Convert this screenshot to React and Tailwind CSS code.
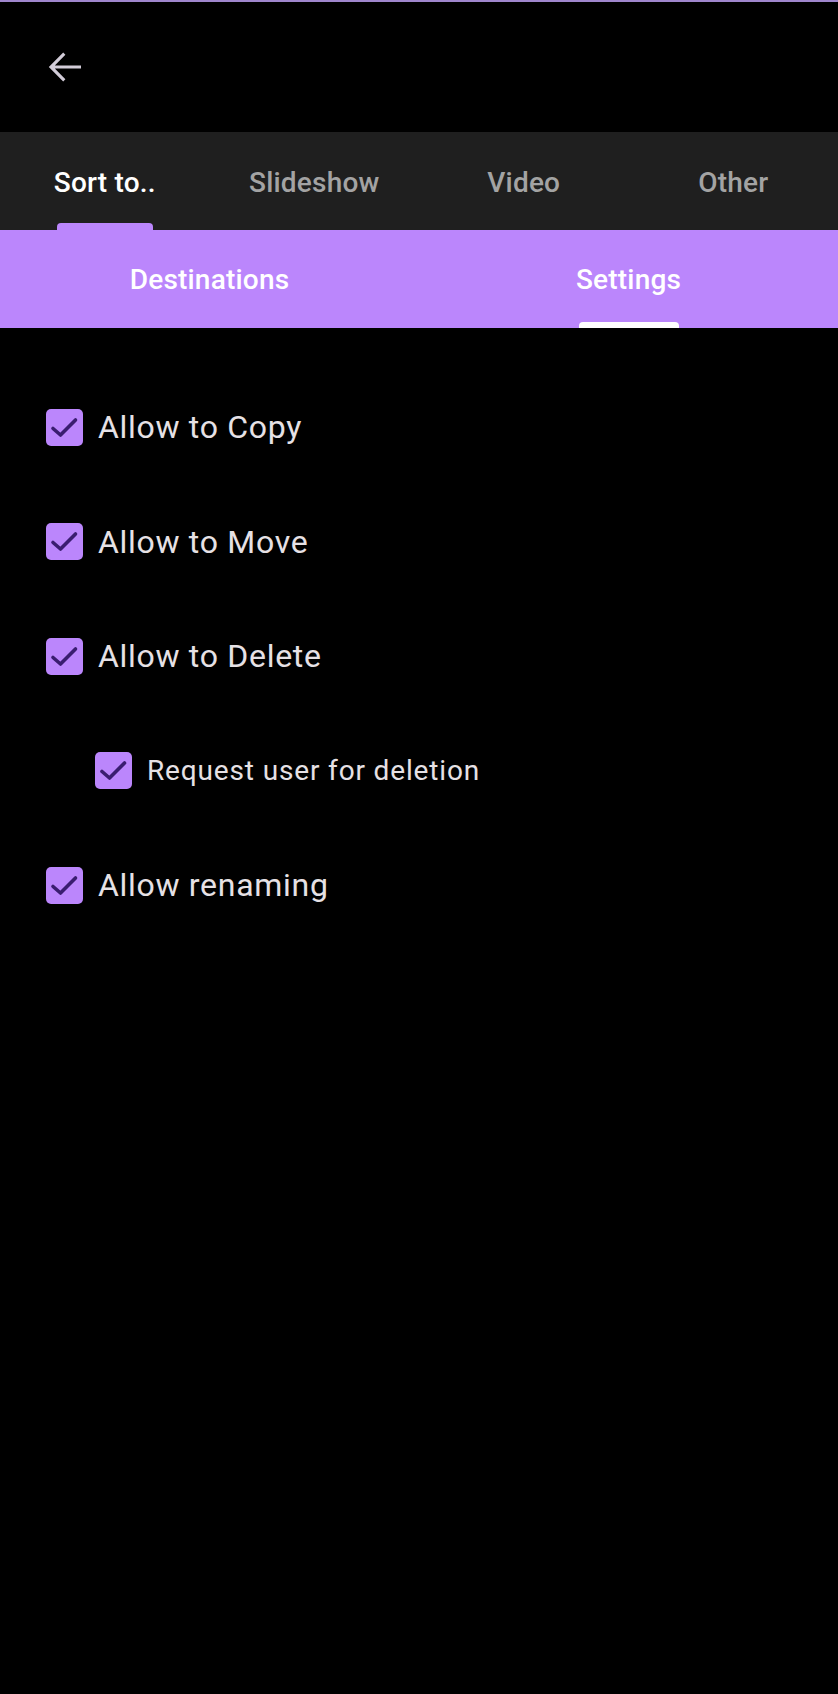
import React from "react";

function CheckBox() {
  return (
    <div className="w-[37px] h-[37px] rounded-[5px] bg-[#bb86fc] flex-none">
      <svg width="37" height="37" viewBox="0 0 37 37">
        <polyline
          points="7,19.5 14.5,26 29.5,11"
          fill="none"
          stroke="#3a1d70"
          strokeWidth="3.6"
          strokeLinecap="round"
          strokeLinejoin="round"
        />
      </svg>
    </div>
  );
}

function App() {
  const topTabs = ["Sort to..", "Slideshow", "Video", "Other"];

  const options = [
    { label: "Allow to Copy" },
    { label: "Allow to Move" },
    { label: "Allow to Delete" },
    { label: "Request user for deletion", nested: true },
    { label: "Allow renaming" },
  ];

  return (
    <div
      className="min-h-[1694px] w-full bg-black"
      style={{ fontFamily: "Roboto, 'Noto Sans', sans-serif" }}
    >
      {/* status line */}
      <div className="h-[2px] bg-[#9f86cc]" />

      {/* Toolbar */}
      <div className="h-[130px] flex items-center pl-[41px]">
        <svg width="48" height="48" viewBox="0 0 24 24" fill="#d2ccd8">
          <path d="M20 11.2H6.9l5.3-5.3-1.1-1.1L3.9 12l7.2 7.2 1.1-1.1-5.3-5.3H20v-1.6z" />
        </svg>
      </div>

      {/* Main tabs */}
      <div className="h-[98px] bg-[#1f1f1f] grid grid-cols-4">
        {topTabs.map((tab, i) => (
          <div key={tab} className="relative flex items-center justify-center pt-[4px]">
            <span
              className={
                i === 0
                  ? "text-[28px] font-medium tracking-[0.2px] text-white"
                  : "text-[28px] font-medium tracking-[0.2px] text-[#a3a3a3]"
              }
            >
              {tab}
            </span>
            {i === 0 && (
              <div className="absolute bottom-0 left-1/2 -translate-x-1/2 w-[96px] h-[7px] rounded-t-[4px] bg-[#bb86fc]" />
            )}
          </div>
        ))}
      </div>

      {/* Sub tabs */}
      <div className="h-[98px] bg-[#bb86fc] grid grid-cols-2">
        <div className="flex items-center justify-center pt-[2px]">
          <span className="text-[28px] font-medium tracking-[0.2px] text-white">
            Destinations
          </span>
        </div>
        <div className="relative flex items-center justify-center pt-[2px]">
          <span className="text-[28px] font-medium tracking-[0.2px] text-white">
            Settings
          </span>
          <div className="absolute bottom-0 left-1/2 -translate-x-1/2 w-[100px] h-[6px] rounded-t-[4px] bg-white" />
        </div>
      </div>

      {/* Settings list */}
      <div className="pt-[42px] flex flex-col">
        {options.map((opt) => (
          <div
            key={opt.label}
            className={
              opt.nested
                ? "h-[114.5px] flex items-center gap-[15px] pl-[95px]"
                : "h-[114.5px] flex items-center gap-[15px] pl-[46px]"
            }
          >
            <CheckBox />
            <span
              className={
                opt.nested
                  ? "text-[28px] tracking-[0.85px] text-[#e6e1e5]"
                  : "text-[32px] tracking-[0.7px] text-[#e6e1e5]"
              }
            >
              {opt.label}
            </span>
          </div>
        ))}
      </div>
    </div>
  );
}

export default App;
